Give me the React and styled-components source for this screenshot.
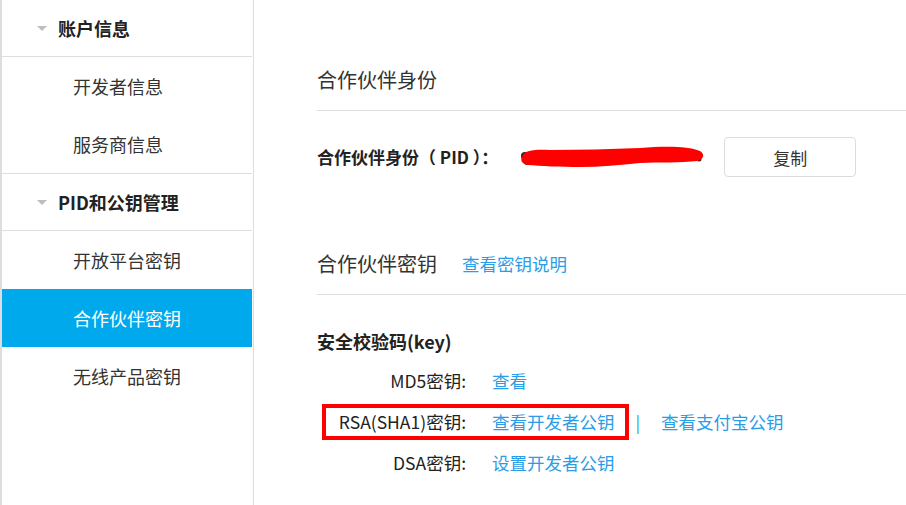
import React from "react";
import styled, { createGlobalStyle } from "styled-components";

const GlobalStyle = createGlobalStyle`
  html, body {
    margin: 0;
    padding: 0;
    background: #fff;
  }
  body {
    font-family: "Noto Sans CJK SC", "Noto Sans", sans-serif;
    color: #333;
  }
`;

const Page = styled.div`
  display: flex;
  width: 906px;
  height: 505px;
  overflow: hidden;
`;

const Sidebar = styled.nav`
  flex: 0 0 250px;
  border-left: 2px solid #dcdce1;
  padding-right: 1px;
  border-right: 1px solid #dedede;
  display: flex;
  flex-direction: column;
`;

const GroupHeader = styled.div`
  display: flex;
  align-items: center;
  height: 56px;
  padding-left: 35px;
  border-bottom: 1px solid #dedede;
  font-size: 18px;
  font-weight: 700;
  color: #222;
  gap: 11px;
  &::before {
    content: "";
    width: 0;
    height: 0;
    border-left: 5px solid transparent;
    border-right: 5px solid transparent;
    border-top: 5px solid #bdbdbd;
  }
`;

const NavItem = styled.div`
  display: flex;
  align-items: center;
  height: 58px;
  padding-left: 71px;
  font-size: 18px;
  color: ${(p) => (p.active ? "#fff" : "#333")};
  background: ${(p) => (p.active ? "#00a9ec" : "transparent")};
  ${(p) => p.last && "border-bottom: 1px solid #dedede;"}
`;

const Main = styled.main`
  flex: 1;
  padding-left: 63px;
  padding-top: 65px;
`;

const SectionTitle = styled.div`
  display: flex;
  align-items: center;
  gap: 25px;
  font-size: 20px;
  line-height: 30px;
  color: #333;
  padding-bottom: 15px;
  border-bottom: 1px solid #dedede;
`;

const Link = styled.a`
  color: #2a9de6;
  font-size: 17.5px;
  text-decoration: none;
  cursor: pointer;
`;

const PidRow = styled.div`
  display: flex;
  align-items: center;
  margin-top: 26px;
  margin-bottom: 72px;
`;

const BoldLabel = styled.div`
  font-size: 17px;
  font-weight: 700;
  color: #222;
  line-height: 26px;
  white-space: pre;
`;

const Redacted = styled.svg`
  margin-left: 22px;
  width: 184px;
  height: 22px;
  flex: none;
`;

const CopyButton = styled.button`
  margin-left: 20px;
  width: 132px;
  height: 40px;
  border: 1px solid #dcdcdc;
  border-radius: 4px;
  background: #fff;
  font-family: inherit;
  font-size: 17px;
  color: #333;
`;

const KeyTitle = styled(BoldLabel)`
  font-size: 18px;
  margin-top: 33px;
  margin-bottom: 6px;
`;

const KeyRow = styled.div`
  position: relative;
  display: grid;
  grid-template-columns: 149px auto;
  column-gap: 26px;
  align-items: center;
  height: 41px;
  font-size: 17.5px;
`;

const KeyLabel = styled.span`
  text-align: right;
  color: #222;
`;

const Links = styled.span`
  display: flex;
  align-items: center;
  gap: 21px;
`;

const Sep = styled.span`
  color: #2a9de6;
  font-size: 17px;
`;

const Highlight = styled.span`
  position: absolute;
  left: 5px;
  top: 50%;
  transform: translateY(-50%);
  width: 307px;
  height: 36px;
  box-sizing: border-box;
  border: 4px solid #ff0000;
  pointer-events: none;
`;

const sidebar = [
  { title: "账户信息", items: ["开发者信息", "服务商信息"] },
  { title: "PID和公钥管理", items: ["开放平台密钥", "合作伙伴密钥", "无线产品密钥"] },
];

const keys = [
  { label: "MD5密钥:", links: ["查看"] },
  { label: "RSA(SHA1)密钥:", links: ["查看开发者公钥", "查看支付宝公钥"], marked: true },
  { label: "DSA密钥:", links: ["设置开发者公钥"] },
];

function Scribble() {
  return (
    <Redacted viewBox="0 0 184 22">
      <circle cx="5" cy="10" r="4" fill="#1d2433" />
      <circle cx="7" cy="16" r="3" fill="#1d2433" />
      <circle cx="179" cy="13" r="2.5" fill="#1d2433" />
      <path
        d="M2 11 C3 5 12 3 30 4 C60 4 90 3 120 2 C145 0 168 0 180 5 C185 8 184 13 178 15 C160 17 140 16 120 17 C100 19 80 21 60 21 C40 21 20 20 8 19 C2 18 0 15 2 11 Z"
        fill="#ff0000"
      />
    </Redacted>
  );
}

export default function App() {
  return (
    <Page>
      <GlobalStyle />
      <Sidebar>
        {sidebar.map((group) => (
          <React.Fragment key={group.title}>
            <GroupHeader>{group.title}</GroupHeader>
            {group.items.map((item, i) => (
              <NavItem
                key={item}
                active={item === "合作伙伴密钥"}
                last={group.title === "账户信息" && i === group.items.length - 1}
              >
                {item}
              </NavItem>
            ))}
          </React.Fragment>
        ))}
      </Sidebar>
      <Main>
        <SectionTitle>合作伙伴身份</SectionTitle>
        <PidRow>
          <BoldLabel>合作伙伴身份（ PID ）：</BoldLabel>
          <Scribble />
          <CopyButton>复制</CopyButton>
        </PidRow>
        <SectionTitle>
          合作伙伴密钥
          <Link>查看密钥说明</Link>
        </SectionTitle>
        <KeyTitle>安全校验码(key)</KeyTitle>
        {keys.map((k) => (
          <KeyRow key={k.label}>
            {k.marked && <Highlight />}
            <KeyLabel>{k.label}</KeyLabel>
            <Links>
              {k.links.map((l, i) => (
                <React.Fragment key={l}>
                  {i > 0 && <Sep>|</Sep>}
                  <Link>{l}</Link>
                </React.Fragment>
              ))}
            </Links>
          </KeyRow>
        ))}
      </Main>
    </Page>
  );
}
